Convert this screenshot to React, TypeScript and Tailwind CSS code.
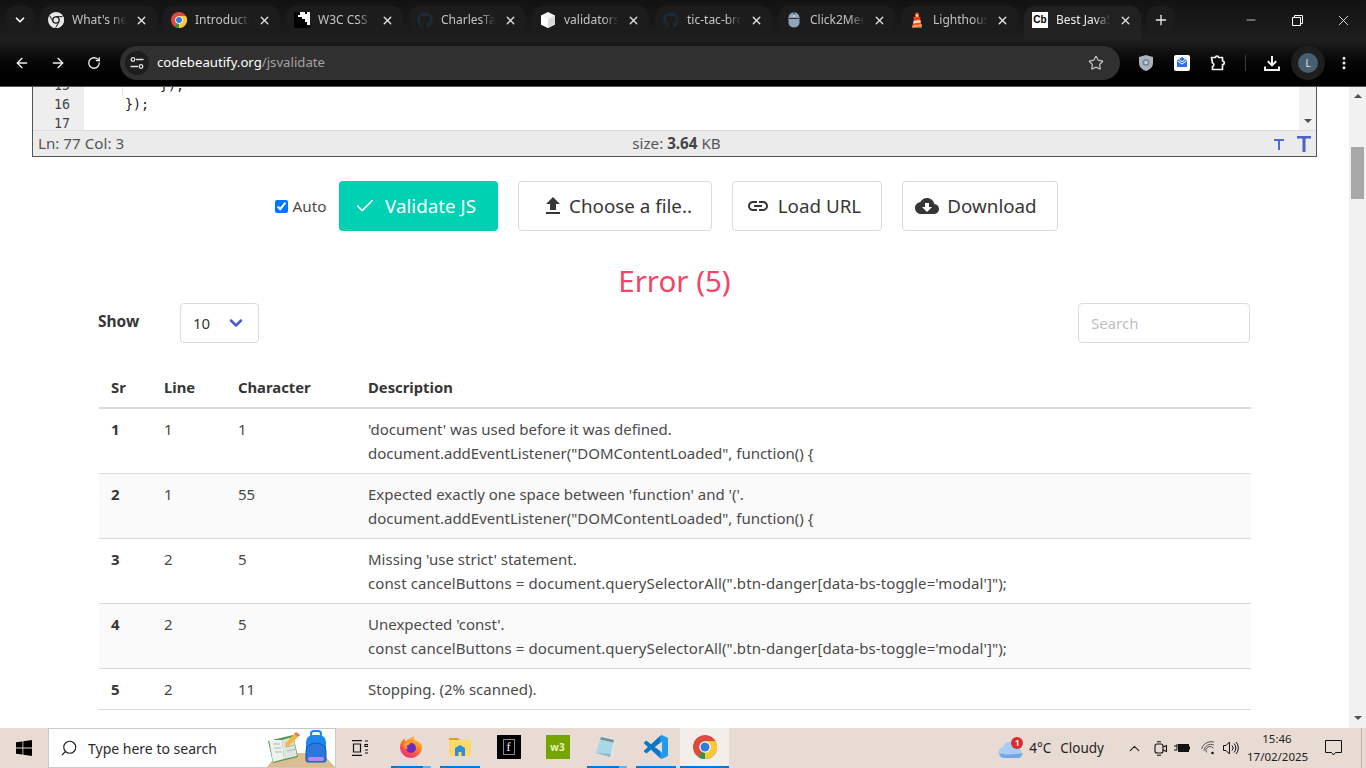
import { useId, type ReactNode } from 'react'
import { ArrowLeft, ArrowRight, Check, ChevronDown, ChevronUp, Minus, MoreVertical, Plus, RotateCw, Search, Star, X } from 'lucide-react'
import { FaGithub } from 'react-icons/fa'

const uiFont = 'font-["Noto_Sans","Open_Sans",sans-serif]'

// ---- favicons ----
const ChromeLogo = ({ size = 16, mono = false }: { size?: number; mono?: boolean }) => (
  <svg width={size} height={size} viewBox="0 0 48 48">
    <circle cx="24" cy="24" r="24" fill={mono ? '#e8e8e8' : '#dd4b3e'} />
    <path d="M24 24 L44.8 36 A24 24 0 0 1 12 44.8 Z" fill={mono ? '#e8e8e8' : '#1f9e4a'} />
    <path d="M24 24 L24 48 A24 24 0 0 0 44.8 12 L24 12 Z" fill={mono ? '#e8e8e8' : '#fcc934'} />
    {mono && <path d="M24 14 H44 M15 29 L5 11 M33 29 L23 47" stroke="#1b1b1b" strokeWidth="3" />}
    <circle cx="24" cy="24" r="11.5" fill={mono ? '#1b1b1b' : '#fff'} />
    <circle cx="24" cy="24" r={mono ? 7.5 : 9} fill={mono ? '#e8e8e8' : '#2f7de1'} />
  </svg>
)

const W3Puzzle = () => (
  <svg width="16" height="16" viewBox="0 0 16 16">
    <rect width="16" height="16" fill="#fff" />
    <path d="M0 0h6v3H4v2h4v2h3v3h2v3h3v3H0z" fill="#000" />
    <path d="M11 0h2v2h-2zM9 12h3v2H9z" fill="#000" />
  </svg>
)

const Cube = () => (
  <svg width="16" height="16" viewBox="0 0 16 16">
    <path d="M8 0l7 3.500v9L8 16l-7-3.500v-9z" fill="#f2f2f2" />
    <path d="M8 7.500l7-4v9L8 16z" fill="#d9d9d9" />
    <path d="M8 7.500L1 3.500v9L8 16z" fill="#fff" />
  </svg>
)

const MouseIcon = () => (
  <svg width="16" height="16" viewBox="0 0 16 16">
    <rect x="2.500" y="0.500" width="11" height="15" rx="5" fill="#8fa4b8" />
    <path d="M3 6.500h10M8 1v5.500" stroke="#1b1b1b" strokeWidth="0.8" />
    <rect x="7" y="2.500" width="2" height="3" rx="1" fill="#d4dde5" />
  </svg>
)

const LighthouseIcon = () => (
  <svg width="16" height="16" viewBox="0 0 16 16">
    <path d="M6 2.500a2 2 0 0 1 4 0V6H6z" fill="#f44b21" />
    <circle cx="8" cy="3.500" r="1.300" fill="#ffe066" />
    <rect x="4.500" y="5" width="7" height="1.500" fill="#f44b21" />
    <path d="M5 6.500h6l2 9.500H3z" fill="#f44b21" />
    <path d="M4.700 9l6.700-1 .4 2.400-7.600 1.200z" fill="#ffd9c2" />
    <path d="M3.600 13.500l9-1.300.4 2-9.800 1z" fill="#ffa96b" />
  </svg>
)

const CbIcon = () => (
  <div className="w-4 h-4 bg-white flex items-center justify-center text-[10px] leading-none font-bold text-black font-['Liberation_Sans',sans-serif]">Cb</div>
)

// titles are as much as the tab shows before it fades out
const tabs: { title: string; icon: ReactNode }[] = [
  { title: "What's ne", icon: <ChromeLogo mono /> },
  { title: 'Introducti', icon: <ChromeLogo /> },
  { title: 'W3C CSS', icon: <W3Puzzle /> },
  { title: 'CharlesTac', icon: <FaGithub className="w-4 h-4 text-[#1d2935]" /> },
  { title: 'validators', icon: <Cube /> },
  { title: 'tic-tac-bro', icon: <FaGithub className="w-4 h-4 text-[#1d2935]" /> },
  { title: 'Click2Mee', icon: <MouseIcon /> },
  { title: 'Lighthous', icon: <LighthouseIcon /> },
]

function Tab({ title, icon, active = false }: { title: string; icon: ReactNode; active?: boolean }) {
  return (
    <div className={active
      ? 'w-[117px] h-[34px] rounded-t-[10px] bg-[#212121] flex items-center pb-[6px] pl-2 pr-[9px] text-[#ececec]'
      : 'w-[117px] h-[28px] rounded-[10px] bg-[#1c1c1c] flex items-center pl-2 pr-[9px] text-[#c4c4c4]'}>
      <span className="w-4 h-4 shrink-0 flex">{icon}</span>
      <span className="ml-2 w-[58px] whitespace-nowrap text-[12px] [mask-image:linear-gradient(to_right,black_68%,transparent_94%)]">{title}</span>
      <X className="ml-auto text-[#e0e0e0]" size={13} strokeWidth={2.5} />
    </div>
  )
}

function TabStrip() {
  return (
    <div className="h-10 flex items-start pt-[6px] bg-gradient-to-b from-[#121212] to-[#1e1e1e]">
      <div className="ml-[6px] w-7 h-7 rounded-[10px] bg-[#1c1c1c] flex items-center justify-center">
        <ChevronDown size={14} strokeWidth={3} className="text-white" />
      </div>
      <div className="ml-[6px] flex gap-[6px]">
        {tabs.map((t) => <Tab key={t.title} {...t} />)}
        <Tab title="Best JavaS" icon={<CbIcon />} active />
      </div>
      <div className="ml-[6px] w-7 h-7 rounded-[10px] bg-[#1c1c1c] flex items-center justify-center">
        <Plus size={16} strokeWidth={2} className="text-[#e8e8e8]" />
      </div>
      <div className="ml-auto -mt-[6px] flex h-10 text-white">
        <div className="w-[46px] flex items-center justify-center"><Minus size={14} strokeWidth={1.2} /></div>
        <div className="w-[46px] flex items-center justify-center">
          <svg width="11" height="11" viewBox="0 0 11 11" fill="none" stroke="currentColor"><path d="M.5 2.500h8v8h-8zM2.500 2.500v-2h8v8h-2" /></svg>
        </div>
        <div className="w-[46px] flex items-center justify-center"><X size={17} strokeWidth={1.2} /></div>
      </div>
    </div>
  )
}

const ToolCell = ({ children }: { children: ReactNode }) => (
  <div className="w-9 h-full flex items-center justify-center">{children}</div>
)

function Toolbar() {
  return (
    <div className="h-[47px] flex items-center pl-1 bg-gradient-to-b from-[#1e1e1e] to-[#000] border-b border-[#555] text-[#f0f0f0]">
      <ToolCell><ArrowLeft size={16} strokeWidth={2} /></ToolCell>
      <ToolCell><ArrowRight size={16} strokeWidth={2} /></ToolCell>
      <ToolCell><RotateCw size={14} strokeWidth={2.2} /></ToolCell>
      <div className="ml-2 w-[1000px] h-[34px] rounded-full bg-[#303030] flex items-center pl-[5px] pr-4">
        <div className="w-6 h-6 rounded-full bg-[#1d1d1d] flex items-center justify-center">
          <svg width="14" height="12" viewBox="0 0 14 12" fill="none" stroke="#e0e0e0" strokeWidth="1.300">
            <path d="M6 2.500h7.500M.5 9.500H8" />
            <circle cx="3" cy="2.500" r="1.800" />
            <circle cx="11" cy="9.500" r="1.800" />
          </svg>
        </div>
        <span className="ml-2 text-[13.2px] text-white">codebeautify.org<span className="text-[#a3a3a3]">/jsvalidate</span></span>
        <Star className="ml-auto text-[#c4c4c4]" size={16} strokeWidth={1.8} />
      </div>
      <div className="ml-2 flex h-full items-center">
        <ToolCell>
          <svg width="14" height="16" viewBox="0 0 14 16">
            <path d="M7 0l7 2v6c0 4-3 6.500-7 8-4-1.500-7-4-7-8V2z" fill="#aab2bd" />
            <circle cx="7" cy="7.500" r="3.500" fill="#7d8894" />
            <circle cx="7" cy="7.500" r="1.800" fill="#c7ced6" />
          </svg>
        </ToolCell>
        <ToolCell>
          <svg width="16" height="16" viewBox="0 0 16 16">
            <rect width="16" height="16" rx="2" fill="#fff" />
            <path d="M8 2l5 3.500v6.500H3V5.500z" fill="#2f6fed" />
            <path d="M3.500 6L8 9l4.500-3M5 4.500L8 7l3-2.500" stroke="#fff" strokeWidth="1" fill="none" />
          </svg>
        </ToolCell>
        <ToolCell>
          <svg width="17" height="16" viewBox="0 0 17 16" fill="none" stroke="currentColor" strokeWidth="1.700" strokeLinejoin="round">
            <path d="M1.500 2.500H5.500a1.500 1.500 0 0 1 3 0h4v3.500a1.500 1.500 0 0 1 0 3.500v5H2.500v-3a1.800 1.800 0 0 0 0-3.500z" />
          </svg>
        </ToolCell>
        <div className="w-[18px] flex justify-center"><div className="w-px h-4 bg-[#3c3c3c]" /></div>
        <ToolCell>
          <svg width="16" height="16" viewBox="0 0 16 16" fill="none" stroke="currentColor" strokeWidth="2">
            <path d="M8 1v9M3.800 6.200L8 10.400l4.200-4.200M1 11.500V15h14v-3.500" />
          </svg>
        </ToolCell>
        <ToolCell>
          <div className="w-[34px] h-[34px] rounded-full bg-[#1e1e1e] flex items-center justify-center">
            <div className="w-5 h-5 rounded-full bg-[#475f70] flex items-center justify-center text-[10px] text-[#e4e4e4]">L</div>
          </div>
        </ToolCell>
        <ToolCell><MoreVertical size={16} strokeWidth={2.5} /></ToolCell>
      </div>
    </div>
  )
}

// ---- editor ----
function Editor() {
  return (
    <div className="mx-auto w-[1285px] h-[70px] border border-t-0 border-[#555] flex flex-col">
      <div className="h-[43px] flex overflow-hidden">
        <div className="flex-1 flex flex-col overflow-hidden font-['DejaVu_Sans_Mono',monospace] text-[13.33px] text-[#222]">
          <div className="-mt-[11px] flex h-[19px] leading-[19px] shrink-0">
            <div className="w-[51px] bg-[#eeeeee] pl-[21px] text-[#444]">15</div>
            <div className="ml-[38px] border-l border-[#e4e4e4] pl-[37px]">{'});'}</div>
          </div>
          <div className="flex h-[19px] leading-[19px] shrink-0">
            <div className="w-[51px] bg-[#eeeeee] pl-[21px] text-[#444]">16</div>
            <div className="pl-[41px]">{'});'}</div>
          </div>
          <div className="flex h-[19px] leading-[19px] shrink-0">
            <div className="w-[51px] bg-[#eeeeee] pl-[21px] text-[#444]">17</div>
          </div>
        </div>
        <div className="w-[17px] bg-[#f1f1f1] flex flex-col justify-end items-center pb-[7px]">
          <div className="w-0 h-0 border-x-[4px] border-x-transparent border-t-[4px] border-t-[#505050]" />
        </div>
      </div>
      <div className="h-[26px] bg-[#ebebeb] border-t border-[#dcdcdc] grid grid-cols-3 items-center px-[5px] text-[15.2px] text-[#555]">
        <span>Ln: 77 Col: 3</span>
        <span className="text-center pl-1">size: <b className="text-[#444]">3.64</b> KB</span>
        <div className="flex items-center justify-end gap-[13px]">
          <svg width="10" height="12" viewBox="0 0 10 12"><path d="M0 1h10v2H6v9H4V3H0z" fill="#4f6bd0" /></svg>
          <svg width="14" height="16" viewBox="0 0 14 16"><path d="M0 0h14v2.500H8.500V16h-3V2.500H0z" fill="#4a62c8" /></svg>
        </div>
      </div>
    </div>
  )
}

// ---- buttons ----
function ActionButton({ children, size, primary = false }: { children: ReactNode; size: string; primary?: boolean }) {
  return (
    <div className={`${size} h-[50px] rounded flex items-center justify-center gap-2 text-[18.8px] ${primary ? 'bg-[#00d1b2] text-white' : 'bg-white border border-[#dbdbdb] text-[#363636]'}`}>
      {children}
    </div>
  )
}

const MatIcon = ({ d }: { d: string }) => (
  <svg width="24" height="24" viewBox="0 0 24 24" fill="currentColor"><path d={d} /></svg>
)

function Actions() {
  return (
    <div className="mt-6 flex items-center justify-center pr-[16px]">
      <input type="checkbox" defaultChecked className="w-[13px] h-[13px] accent-[#0075ff] m-0" />
      <span className="ml-[4px] text-[15.3px] text-[#4a4a4a]">Auto</span>
      <div className="ml-3">
        <ActionButton size="w-[159px] pr-[6px]" primary><Check size={22} strokeWidth={1.700} /><span className="ml-[1px]">Validate JS</span></ActionButton>
      </div>
      <div className="ml-5">
        <ActionButton size="w-[194px] pl-[4px]"><MatIcon d="M9 16h6v-6h4l-7-7-7 7h4zm-4 2h14v2H5z" /><span className="-ml-1">Choose a file..</span></ActionButton>
      </div>
      <div className="ml-5">
        <ActionButton size="w-[150px] pr-[6px]"><MatIcon d="M3.900 12c0-1.710 1.390-3.100 3.100-3.100h4V7H7c-2.760 0-5 2.240-5 5s2.240 5 5 5h4v-1.900H7c-1.710 0-3.100-1.390-3.100-3.100zM8 13h8v-2H8v2zm9-6h-4v1.900h4c1.710 0 3.100 1.390 3.100 3.100s-1.390 3.100-3.100 3.100h-4V17h4c2.760 0 5-2.240 5-5s-2.240-5-5-5z" /><span>Load URL</span></ActionButton>
      </div>
      <div className="ml-5">
        <ActionButton size="w-[156px] pr-[7px]"><MatIcon d="M19.350 10.040C18.670 6.590 15.640 4 12 4 9.110 4 6.600 5.640 5.350 8.040 2.340 8.360 0 10.910 0 14c0 3.310 2.690 6 6 6h13c2.760 0 5-2.240 5-5 0-2.640-2.050-4.780-4.650-4.960zM17 13l-5 5-5-5h3V9h4v4h3z" /><span>Download</span></ActionButton>
      </div>
    </div>
  )
}

// ---- results table ----
const fnLine = 'document.addEventListener("DOMContentLoaded", function() {'
const cancelLine = `const cancelButtons = document.querySelectorAll(".btn-danger[data-bs-toggle='modal']");`
const rows = [
  { sr: 1, line: 1, ch: 1, text: "'document' was used before it was defined.", code: fnLine },
  { sr: 2, line: 1, ch: 55, text: "Expected exactly one space between 'function' and '('.", code: fnLine },
  { sr: 3, line: 2, ch: 5, text: "Missing 'use strict' statement.", code: cancelLine },
  { sr: 4, line: 2, ch: 5, text: "Unexpected 'const'.", code: cancelLine },
  { sr: 5, line: 2, ch: 11, text: 'Stopping. (2% scanned).', code: '' },
]

function ResultsTable() {
  return (
    <table className="mt-6 ml-px w-[1152px] table-fixed border-collapse text-[15px] leading-6 text-[#4a4a4a]">
      <thead>
        <tr className="h-[41px] border-b-2 border-[#dbdbdb] text-left text-[14.8px] text-[#363636]">
          <th className="w-[65px] pl-3 font-bold">Sr</th>
          <th className="w-[74px] pl-0 font-bold">Line</th>
          <th className="w-[130px] pl-0 font-bold">Character</th>
          <th className="font-bold">Description</th>
        </tr>
      </thead>
      <tbody>
        {rows.map((r) => (
          <tr key={r.sr} className={`border-b border-[#dbdbdb] align-top ${r.sr % 2 === 0 ? 'bg-[#fafafa]' : ''}`}>
            <td className="pl-3 py-2 font-bold text-[#363636]">{r.sr}</td>
            <td className="py-2">{r.line}</td>
            <td className="py-2">{r.ch}</td>
            <td className="py-2">
              <div>{r.text}</div>
              {r.code && <div className={r.code === cancelLine ? 'tracking-[0.1px]' : ''}>{r.code}</div>}
            </td>
          </tr>
        ))}
      </tbody>
    </table>
  )
}

function Results() {
  return (
    <div className="mx-auto w-[1153px]">
      <h2 className="mt-[30px] h-10 leading-10 text-center text-[29.5px] text-[#f14668]">Error (5)</h2>
      <div className="mt-[2px] flex items-start justify-between pr-px">
        <div className="flex items-start">
          <span className="w-[82px] mt-[6px] text-[15.5px] leading-6 font-bold text-[#363636]">Show</span>
          <div className="w-[79px] h-10 rounded border border-[#dbdbdb] flex items-center pl-3 text-[15px] text-[#363636]">
            10
            <ChevronDown className="ml-[16px] text-[#485fc7]" size={20} strokeWidth={3} />
          </div>
        </div>
        <div className="w-[172px] h-10 rounded border border-[#dbdbdb] flex items-center pl-3 text-[15px] text-[#c0c0c0]">Search</div>
      </div>
      <ResultsTable />
    </div>
  )
}

function PageScrollbar() {
  return (
    <div className="w-[17px] shrink-0 bg-[#f1f1f1] flex flex-col items-center">
      <div className="mt-[7px] w-0 h-0 border-x-[4px] border-x-transparent border-b-[4px] border-b-[#505050]" />
      <div className="mt-[49px] w-[13px] h-[52px] bg-[#a8a8a8]" />
      <div className="mt-auto mb-[8px] w-0 h-0 border-x-[4px] border-x-transparent border-t-[4px] border-t-[#505050]" />
    </div>
  )
}

// ---- taskbar icons ----
function SearchArt() {
  return (
    <svg width="80" height="38" viewBox="0 0 80 38" className="self-end shrink-0">
      <path d="M12 38l11-14h44l13 14z" fill="#dcbd92" />
      <path d="M13 12l25-6 5 22-25 6z" fill="#4d9a55" />
      <path d="M14 11l13 0 2 19-11 3z" fill="#eef1ee" />
      <path d="M27 11l11-3 4 19-13 3z" fill="#dfe6e0" />
      <path d="M30 14l9-2M31 18l9-2M32 22l9-2M18 15l7 0M19 19l7 0M20 23l7 0" stroke="#a9b8ad" strokeWidth="1" />
      <path d="M31 14l8-9 4 3-9 9-4 1z" fill="#f5b642" />
      <path d="M39 5l2-2 4 3-2 2z" fill="#ef6c5a" />
      <rect x="51" y="6" width="20" height="27" rx="7" fill="#1f86ee" />
      <rect x="56" y="2" width="10" height="7" rx="3" fill="none" stroke="#1f86ee" strokeWidth="2" />
      <path d="M51 22a10 8 0 0 1 20 0v9a2 2 0 0 1-2 2H53a2 2 0 0 1-2-2z" fill="#2b78dc" stroke="#1259b8" strokeWidth="1" />
      <rect x="53" y="28" width="16" height="4" rx="2" fill="#b48af0" />
    </svg>
  )
}

function FirefoxIcon() {
  const id = useId()
  return (
    <svg width="24" height="24" viewBox="0 0 24 24">
      <defs>
        <linearGradient id={id} x1="0.800" y1="0" x2="0.200" y2="1">
          <stop offset="0" stopColor="#ffd22e" />
          <stop offset="0.450" stopColor="#ff7a2b" />
          <stop offset="1" stopColor="#f0237e" />
        </linearGradient>
      </defs>
      <path d="M23 12a11 11 0 1 1-21.500-3.300C2.500 6 4 4.500 5.500 3.500 5.500 5 6 6 7 6.500 9 3.500 13 3 15 1c.5 2-0.500 3 1 4 3 1.500 7 2.500 7 7z" fill={`url(#${id})`} />
      <circle cx="12" cy="13" r="5" fill="#6a2dbb" />
      <path d="M5 9c2-3 7-4 10-2-3 0-4 1-5 3-2 0-3 2-1 4-3 0-5-2-4-5z" fill="#ff9a2e" />
    </svg>
  )
}

const ExplorerIcon = () => (
  <svg width="24" height="24" viewBox="0 0 24 24">
    <path d="M1 3h9l2 2h-11z" fill="#d9a320" />
    <path d="M1 5h22v16H1z" fill="#fbd96b" />
    <path d="M7 13l5-3 5 3v8h-3.500v-4h-3v4H7z" fill="#2f8fd8" />
  </svg>
)

const NotepadIcon = () => (
  <svg width="24" height="24" viewBox="0 0 24 24">
    <path d="M6 1l14 2-1 18-3 2z" fill="#e3e6e0" />
    <path d="M6 2L1 18l14 4 4-17z" fill="#a8d8e8" />
    <path d="M6 2l13 3-.6 2.500L5.200 4.500z" fill="#7a8f96" />
    <path d="M1 18l14 4 1-3z" fill="#8fb6c4" />
  </svg>
)

function VsCodeIcon() {
  const id = useId()
  return (
    <svg width="24" height="24" viewBox="0 0 24 24">
      <defs>
        <linearGradient id={id} x1="0" y1="0" x2="1" y2="0">
          <stop offset="0.650" stopColor="#0a78c8" />
          <stop offset="0.700" stopColor="#1f9cf0" />
        </linearGradient>
      </defs>
      <path fill={`url(#${id})`} d="M23.150 2.587L18.210.21a1.494 1.494 0 0 0-1.705.29l-9.460 8.630-4.120-3.128a.999.999 0 0 0-1.276.057L.327 7.261A1 1 0 0 0 .326 8.740L3.899 12 .326 15.260a1 1 0 0 0 .001 1.479L1.650 17.940a.999.999 0 0 0 1.276.057l4.120-3.128 9.460 8.630a1.492 1.492 0 0 0 1.704.29l4.942-2.377A1.500 1.500 0 0 0 24 20.060V3.939a1.500 1.500 0 0 0-.850-1.352zm-5.146 14.861L10.826 12l7.178-5.448v10.896z" />
    </svg>
  )
}

const TaskCell = ({ children, open = false, split = false, active = false }: { children: ReactNode; open?: boolean; split?: boolean; active?: boolean }) => (
  <div className={`w-[49px] h-10 flex flex-col items-center ${active ? 'bg-[#f3eeea]' : ''}`}>
    <div className="flex-1 flex items-center justify-center">{children}</div>
    {open ? (
      <div className={`h-[2px] flex ${active ? 'w-full' : 'w-10'}`}>
        <div className={`h-full bg-[#0078d4] ${split ? 'w-8' : 'w-full'}`} />
        {split && <div className="h-full w-2 bg-[#6fb0e4]" />}
      </div>
    ) : <div className="h-[2px]" />}
  </div>
)

function Taskbar() {
  return (
    <div className={`h-10 shrink-0 bg-[#e8dbd3] flex items-stretch text-[#1e1e1e] ${uiFont}`}>
      <div className="w-12 flex items-center justify-center">
        <svg width="16" height="16" viewBox="0 0 16 16" fill="#000">
          <path d="M0 2.300l6.500-.9v6.200H0zM7.300 1.300L16 0v7.600H7.300zM0 8.400h6.500v6.200L0 13.700zM7.300 8.400H16V16l-8.700-1.200z" />
        </svg>
      </div>
      <div className="w-[288px] bg-white border border-[#c9c9c9] flex items-center pl-[11px] overflow-hidden">
        <Search size={18} strokeWidth={1.500} className="-scale-x-100 text-[#222] shrink-0" />
        <span className="ml-[10px] text-[14px] text-[#2b2b2b] whitespace-nowrap">Type here to search</span>
        <div className="ml-auto self-stretch flex"><SearchArt /></div>
      </div>
      <div className="w-[50px] pr-[3px] flex items-center justify-center">
        <svg width="16" height="16" viewBox="0 0 16 16" fill="none" stroke="#111" strokeWidth="1.200">
          <path d="M0 .6h10M0 15.400h10M1.500 4h7v8h-7z" />
          <path d="M13 4.500h3v2h-3zM13 10h3M13 13h3M13 1h3" />
        </svg>
      </div>
      <TaskCell open split><FirefoxIcon /></TaskCell>
      <TaskCell open><ExplorerIcon /></TaskCell>
      <TaskCell>
        <div className="w-6 h-6 bg-black flex items-center justify-center text-[12px] text-white font-['Liberation_Serif',serif]"><span className="border border-[#888] px-[3px] leading-[14px]">f</span></div>
      </TaskCell>
      <TaskCell>
        <div className="w-6 h-6 bg-[#76a500] flex items-center justify-center text-[10px] font-bold text-[#e6f2c0]">w3</div>
      </TaskCell>
      <TaskCell open split><NotepadIcon /></TaskCell>
      <TaskCell open><VsCodeIcon /></TaskCell>
      <TaskCell open active><ChromeLogo size={24} /></TaskCell>

      <div className="ml-auto flex items-center">
        <div className="relative w-[26px] h-[18px] mt-[1px]">
          <svg width="26" height="18" viewBox="0 0 26 18">
            <path d="M6 18a5.500 5.500 0 0 1-1-10.900C6 3 10 1 14 2.500c3 1 4.500 3 5 5a5.500 5.500 0 0 1 1 10.500z" fill="#a9cdf2" />
            <path d="M1 13c4 2 14 2 24 0-1 3-3 5-5 5H6c-2 0-4-2-5-5z" fill="#6ea8e8" />
          </svg>
          <div className="absolute -top-[3px] left-[13px] w-3 h-3 rounded-full bg-[#d92c2c] text-white text-[8px] leading-3 text-center font-bold">1</div>
        </div>
        <span className="ml-[5px] text-[13.5px]">4°C</span>
        <span className="ml-[9px] text-[13.5px]">Cloudy</span>
        <ChevronUp className="ml-[22px] text-[#222]" size={17} strokeWidth={1.500} />
        <svg className="ml-[11px]" width="13" height="15" viewBox="0 0 13 15" fill="none" stroke="#111" strokeWidth="1.100">
          <rect x="1" y="3" width="8" height="9" rx="2" />
          <path d="M9 6l3.500-1.500v6L9 9M3 .8h4M3 14.200h4" />
        </svg>
        <svg className="ml-[7px]" width="16" height="10" viewBox="0 0 16 10">
          <path d="M0 3h3V1M3 3v4H0" stroke="#111" fill="none" />
          <rect x="4" y="1" width="11" height="8" fill="#111" />
          <rect x="15" y="3.500" width="1" height="3" fill="#111" />
        </svg>
        <svg className="ml-[11px]" width="14" height="14" viewBox="0 0 14 14" fill="none" stroke="#555" strokeWidth="1">
          <path d="M.5 8A10 10 0 0 1 13 1M3 10a7 7 0 0 1 10-6M5.500 11.500a4 4 0 0 1 7-4" />
          <circle cx="11.500" cy="12" r="1.300" fill="#111" stroke="none" />
        </svg>
        <svg className="ml-[8px]" width="16" height="14" viewBox="0 0 16 14" fill="none" stroke="#111" strokeWidth="1">
          <path d="M.5 4.500h2.500L6.500 1v12L3 9.500H.5zM9 4.500a3.500 3.500 0 0 1 0 5M11 2.500a6.500 6.500 0 0 1 0 9M13 1a9 9 0 0 1 0 12" />
        </svg>
        <div className="ml-[8px] w-[60px] text-center text-[11.5px] leading-[18px] whitespace-nowrap">
          <div>15:46</div>
          <div>17/02/2025</div>
        </div>
        <svg className="ml-[18px]" width="17" height="16" viewBox="0 0 17 16" fill="none" stroke="#111" strokeWidth="1">
          <path d="M.5.5h16v12h-6L8.500 15l-2-2.500h-6z" />
        </svg>
        <div className="ml-[19px] w-[5px] h-full border-l border-[#bdb2ab]" />
      </div>
    </div>
  )
}

export default function App() {
  return (
    <div className={`w-[1366px] h-[768px] overflow-hidden flex flex-col bg-white ${uiFont}`}>
      <div className="bg-black shrink-0">
        <TabStrip />
        <Toolbar />
      </div>
      <div className="flex-1 flex min-h-0">
        <div className="flex-1 min-w-0 overflow-hidden">
          <Editor />
          <Actions />
          <Results />
        </div>
        <PageScrollbar />
      </div>
      <Taskbar />
    </div>
  )
}
